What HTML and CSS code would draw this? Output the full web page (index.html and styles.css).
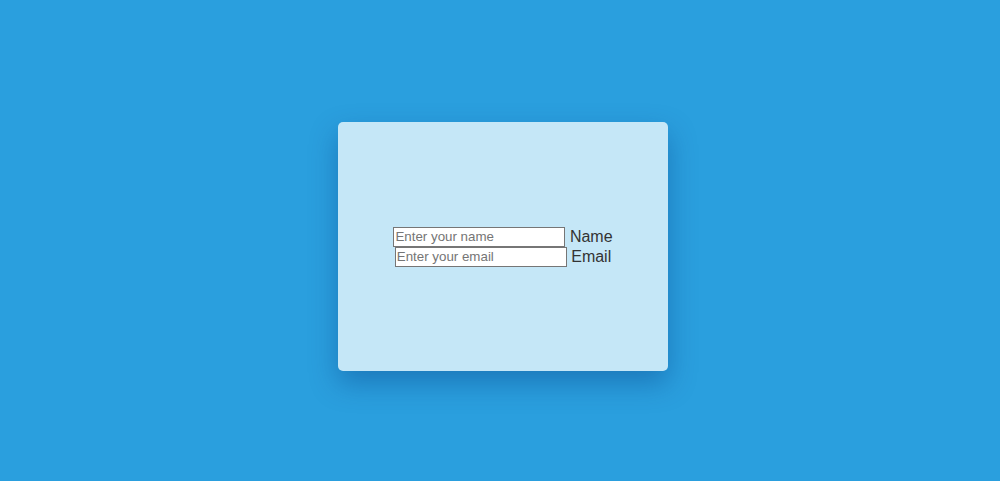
FILE: index.html
```html
<!DOCTYPE html>
<html>
<head>
<meta charset="utf-8">
<link rel="stylesheet" href="styles.css">
</head>
<body>
<div class="card">
  <div class="row"><input type="text" class="field" placeholder="Enter your name"> <label class="lbl">Name</label></div>
  <div class="row"><input type="email" class="field" placeholder="Enter your email"> <label class="lbl">Email</label></div>
</div>
</body>
</html>
```
FILE: styles.css
```css
html, body {
  margin: 0;
  height: 100%;
}
body {
  background: #2a9fde;
  display: flex;
  justify-content: center;
  align-items: center;
  box-sizing: border-box;
  padding: 12px 0 0 6px;
  font-family: "Liberation Sans", Arial, sans-serif;
}
.card {
  width: 330px;
  height: 249px;
  background: #c5e7f7;
  border-radius: 5px;
  box-shadow: 0 12px 28px rgba(0, 50, 120, 0.35);
  display: flex;
  flex-direction: column;
  justify-content: center;
  align-items: center;
}
.row {
  text-align: center;
  font-size: 16px;
  line-height: 20px;
  color: #333;
  white-space: nowrap;
}
.field {
  box-sizing: border-box;
  width: 172px;
  height: 20px;
  font-family: "Liberation Sans", Arial, sans-serif;
  font-size: 13.33px;
  padding: 1px 1px;
  border: 1px solid #767676;
  background: #fff;
  vertical-align: top;
  margin: 0;
}
.field::placeholder {
  color: #757575;
}
.lbl {
  color: #333;
}
```
